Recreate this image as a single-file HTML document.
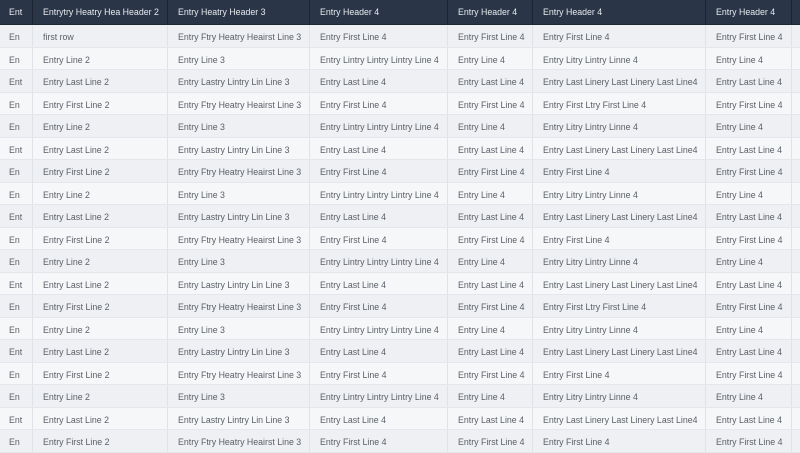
<!DOCTYPE html>
<html><head><meta charset="utf-8"><style>
*{margin:0;padding:0;box-sizing:border-box}
body{width:800px;height:450px;overflow:hidden;background:#f4f6f9;font-family:"Liberation Sans",sans-serif;font-size:8.8px}
.row{position:absolute;left:0;width:800px;height:22.5px;border-bottom:1px solid #e3e6eb}
.row div{position:absolute;top:0;height:100%;line-height:24px;padding-left:10px;white-space:nowrap;overflow:hidden;color:#5a5f66;border-right:1px solid #dfe2e7}
.hd{height:25px;background:#2a3547;border-bottom:1px solid #1e2634}
.hd div{line-height:25px;color:#e6eaf0;border-right:1px solid #1c2431}
.o{background:#eef0f3}.e{background:#f6f7f9}
.c1{left:0;width:33px;padding-left:9px!important}.c2{left:33px;width:135px}.c3{left:168px;width:142px}.c4{left:310px;width:138px}.c5{left:448px;width:85px}.c6{left:533px;width:173px}.c7{left:706px;width:86px}.c8{left:792px;width:8px}
</style></head><body>
<div class="row hd" style="top:0"><div class="c1">Ent</div><div class="c2">Entrytry Heatry Hea Header 2</div><div class="c3">Entry Heatry Header 3</div><div class="c4">Entry Header 4</div><div class="c5">Entry Header 4</div><div class="c6">Entry Header 4</div><div class="c7">Entry Header 4</div><div class="c8"></div></div>
<div id="rows"></div>
<script>
var A=["En","Entry First Line 2","Entry Ftry Heatry Heairst Line 3","Entry First Line 4","Entry First Line 4","Entry First Line 4","Entry First Line 4"];
var B=["En","Entry Line 2","Entry Line 3","Entry Lintry Lintry Lintry Line 4","Entry Line 4","Entry Litry Lintry Linne 4","Entry Line 4"];
var C=["Ent","Entry Last Line 2","Entry Lastry Lintry Lin Line 3","Entry Last Line 4","Entry Last Line 4","Entry Last Linery Last Linery Last Line4","Entry Last Line 4"];
var h="";
for(var i=0;i<19;i++){
 var r=[A,B,C][i%3].slice();
 if(i==0)r[1]="first row";
 if(i==3||i==12)r[5]="Entry First Ltry First Line 4";
 h+='<div class="row '+(i%2==0?'o':'e')+'" style="top:'+(25+i*22.5)+'px">';
 for(var j=0;j<7;j++)h+='<div class="c'+(j+1)+'">'+r[j]+'</div>';
 h+='<div class="c8"></div></div>';
}
document.getElementById("rows").innerHTML=h;
</script>
</body></html>
